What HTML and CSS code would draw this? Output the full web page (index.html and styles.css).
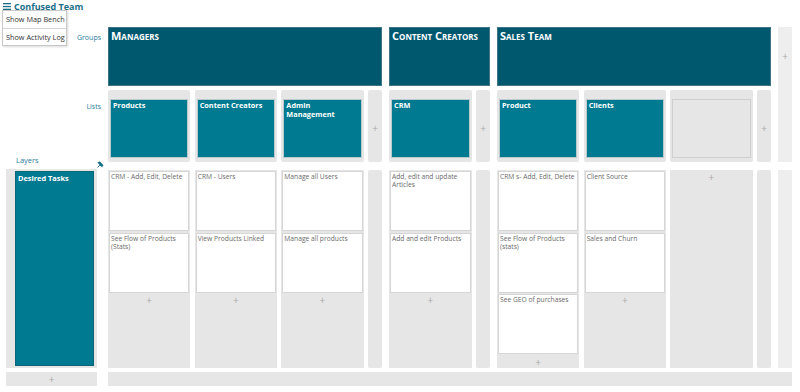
FILE: index.html
```html
<!DOCTYPE html>
<html lang="en">
<head>
  <meta charset="UTF-8" />
  <title>Confused Team</title>
  <link rel="stylesheet" href="styles.css">
</head>
<body>
  <div class="topbar">
    <span class="menu-btn">
      <svg width="8" height="7" viewBox="0 0 8 7"><rect y="0" width="8" height="1.3" fill="#1b6f89"/><rect y="2.9" width="8" height="1.3" fill="#1b6f89"/><rect y="5.7" width="8" height="1.3" fill="#1b6f89"/></svg>
    </span>
    <span class="team-name">Confused Team</span>
    <div class="dropdown">
      <div class="dropdown-item">Show Map Bench</div>
      <div class="dropdown-item">Show Activity Log</div>
    </div>
  </div>

  <div class="board">
    <div class="row-label groups-label">Groups</div>
    <div class="row-label lists-label">
      <span>Lists</span>
      <div class="layers-label">
        <span>Layers</span>
        <svg class="pin" width="7" height="7" viewBox="0 0 7 7"><path d="M2.6 0.4 L6.6 4.4 L5.6 4.6 L4.6 3.8 L3.2 5.2 L1.8 1.2 Z" fill="#1b6f89"/><path d="M0.4 1.6 L2.8 0.6 L6 3.9 L5.2 6.4 Z" fill="#1b6f89"/><path d="M3.4 3.4 L0.6 6.4" stroke="#1b6f89" stroke-width="1"/></svg>
      </div>
    </div>

    <!-- Managers -->
    <div class="group wide">
      <div class="group-head">Managers</div>
      <div class="lane">
        <div class="list"><div class="list-card">Products</div></div>
        <div class="list"><div class="list-card">Content Creators</div></div>
        <div class="list"><div class="list-card">Admin Management</div></div>
        <div class="list-add">+</div>
      </div>
      <div class="lane tasks">
        <div class="task-col">
          <div class="task">CRM - Add, Edit, Delete</div>
          <div class="task">See Flow of Products (Stats)</div>
          <div class="add">+</div>
        </div>
        <div class="task-col">
          <div class="task">CRM - Users</div>
          <div class="task">View Products Linked</div>
          <div class="add">+</div>
        </div>
        <div class="task-col">
          <div class="task">Manage all Users</div>
          <div class="task">Manage all products</div>
          <div class="add">+</div>
        </div>
        <div class="list-add blank"></div>
      </div>
    </div>

    <!-- Content Creators -->
    <div class="group narrow">
      <div class="group-head">Content Creators</div>
      <div class="lane">
        <div class="list"><div class="list-card">CRM</div></div>
        <div class="list-add">+</div>
      </div>
      <div class="lane tasks">
        <div class="task-col">
          <div class="task">Add, edit and update Articles</div>
          <div class="task">Add and edit Products</div>
          <div class="add">+</div>
        </div>
        <div class="list-add blank"></div>
      </div>
    </div>

    <!-- Sales Team -->
    <div class="group wide">
      <div class="group-head">Sales Team</div>
      <div class="lane">
        <div class="list"><div class="list-card">Product</div></div>
        <div class="list"><div class="list-card">Clients</div></div>
        <div class="list"><div class="list-card empty"></div></div>
        <div class="list-add">+</div>
      </div>
      <div class="lane tasks">
        <div class="task-col">
          <div class="task">CRM s- Add, Edit, Delete</div>
          <div class="task">See Flow of Products (stats)</div>
          <div class="task">See GEO of purchases</div>
          <div class="add">+</div>
        </div>
        <div class="task-col">
          <div class="task">Client Source</div>
          <div class="task">Sales and Churn</div>
          <div class="add">+</div>
        </div>
        <div class="task-col">
          <div class="add top">+</div>
        </div>
        <div class="list-add blank"></div>
      </div>
    </div>

    <div class="group-add">+</div>
    <div class="layer-add-col"></div>

    <div class="layer">
      <div class="layer-card">Desired Tasks</div>
    </div>

    <div class="layer-add">+</div>
    <div class="footer-bar"></div>
  </div>
</body>
</html>
```

FILE: styles.css
```css
* {
  box-sizing: border-box;
}

html, body {
  margin: 0;
  padding: 0;
  background: #fff;
  font-family: "Open Sans", Arial, sans-serif;
  width: 800px;
  height: 392px;
  overflow: hidden;
}

.topbar {
  position: relative;
  height: 27px;
  display: flex;
  align-items: flex-start;
  padding: 2px 0 0 3px;
}

.menu-btn {
  display: flex;
  padding-top: 1px;
}

.team-name {
  margin-left: 3px;
  margin-top: -1px;
  color: #1b6f89;
  font-weight: bold;
  font-size: 9px;
  line-height: 11px;
}

.dropdown {
  position: absolute;
  top: 10px;
  left: 2px;
  width: 65px;
  background: #fff;
  border: 1px solid #c8c8c8;
  box-shadow: 1px 1px 2px rgba(0,0,0,0.15);
  z-index: 5;
}

.dropdown-item {
  height: 17px;
  line-height: 16px;
  padding-left: 3px;
  font-size: 7.3px;
  color: #333;
  white-space: nowrap;
}

.dropdown-item + .dropdown-item {
  border-top: 1px solid #d6d6d6;
}

.board {
  display: grid;
  grid-template-columns: 101px 274px 101px 274px 14px;
  grid-template-rows: 59px 72px 202px 14px;
  column-gap: 7px;
  row-gap: 4px;
}

.row-label {
  grid-column: 1;
  color: #2a7ea0;
  font-size: 7px;
  text-align: right;
}

.groups-label {
  grid-row: 1;
  padding-top: 6px;
}

.lists-label {
  grid-row: 2;
  padding-top: 12px;
  display: flex;
  flex-direction: column;
  justify-content: space-between;
}

.layers-label {
  display: flex;
  justify-content: space-between;
  padding-left: 16px;
  margin-bottom: -6px;
  margin-right: -3px;
  text-align: left;
  font-size: 7.5px;
}

.pin {
  margin-top: 6px;
}

.group {
  grid-row: 1 / 4;
  display: flex;
  flex-direction: column;
}

.group-head {
  height: 59px;
  background: #00586f;
  border: 1px solid #3d7486;
  color: #fff;
  font-weight: bold;
  font-size: 11px;
  font-variant: small-caps;
  padding: 1px 2px;
  line-height: 14px;
}

.lane {
  display: flex;
  gap: 4.5px;
  height: 72px;
  margin-top: 4px;
}

.lane.tasks {
  height: 198px;
  margin-top: 8px;
}

.list {
  flex: 1;
  background: #e6e6e6;
  border-radius: 2px;
  padding: 9px 2px 4px 2px;
}

.list-card {
  height: 59px;
  background: #007a91;
  border: 1px solid #b9c9ce;
  color: #fff;
  font-weight: bold;
  font-size: 7.3px;
  line-height: 9px;
  padding: 1px 2px;
}

.list-card.empty {
  background: #e6e6e6;
  border: 1px solid #cfcfcf;
}

.list-add {
  width: 14px;
  flex: none;
  background: #e6e6e6;
  border-radius: 2px;
  color: #aaa;
  font-size: 10px;
  display: flex;
  align-items: center;
  justify-content: center;
  padding-top: 4px;
}

.task-col {
  flex: 1;
  background: #e6e6e6;
  padding: 1px 1px;
}

.task {
  height: 60px;
  background: #fff;
  border: 1px solid #d6d6d6;
  margin-bottom: 1.5px;
  color: #6a6a6a;
  font-size: 6.7px;
  line-height: 8px;
  padding: 1px 1px;
}

.add {
  text-align: center;
  color: #aaa;
  font-size: 10px;
  line-height: 12px;
}

.add.top {
  margin-top: 0;
}

.group-add {
  grid-column: 5;
  grid-row: 1 / 3;
  background: #eeeeee;
  color: #aaa;
  font-size: 10px;
  text-align: center;
  padding-top: 22px;
}

.layer-add-col {
  grid-column: 5;
  grid-row: 3;
  margin-top: 4px;
  background: #eeeeee;
}

.layer {
  grid-column: 1;
  grid-row: 3;
  margin: 3px 4px 0 6px;
  background: #e6e6e6;
  padding: 2px 3px 2px 9px;
}

.layer-card {
  height: 100%;
  background: #007a91;
  border: 1px solid #0b6579;
  color: #fff;
  font-weight: bold;
  font-size: 7.4px;
  padding: 1px 2px;
}

.layer-add {
  grid-column: 1;
  grid-row: 4;
  margin: 0 4px 0 6px;
  background: #e6e6e6;
  color: #aaa;
  font-size: 10px;
  line-height: 14px;
  text-align: center;
}

.footer-bar {
  grid-column: 2 / 6;
  grid-row: 4;
  background: #e6e6e6;
}
```
